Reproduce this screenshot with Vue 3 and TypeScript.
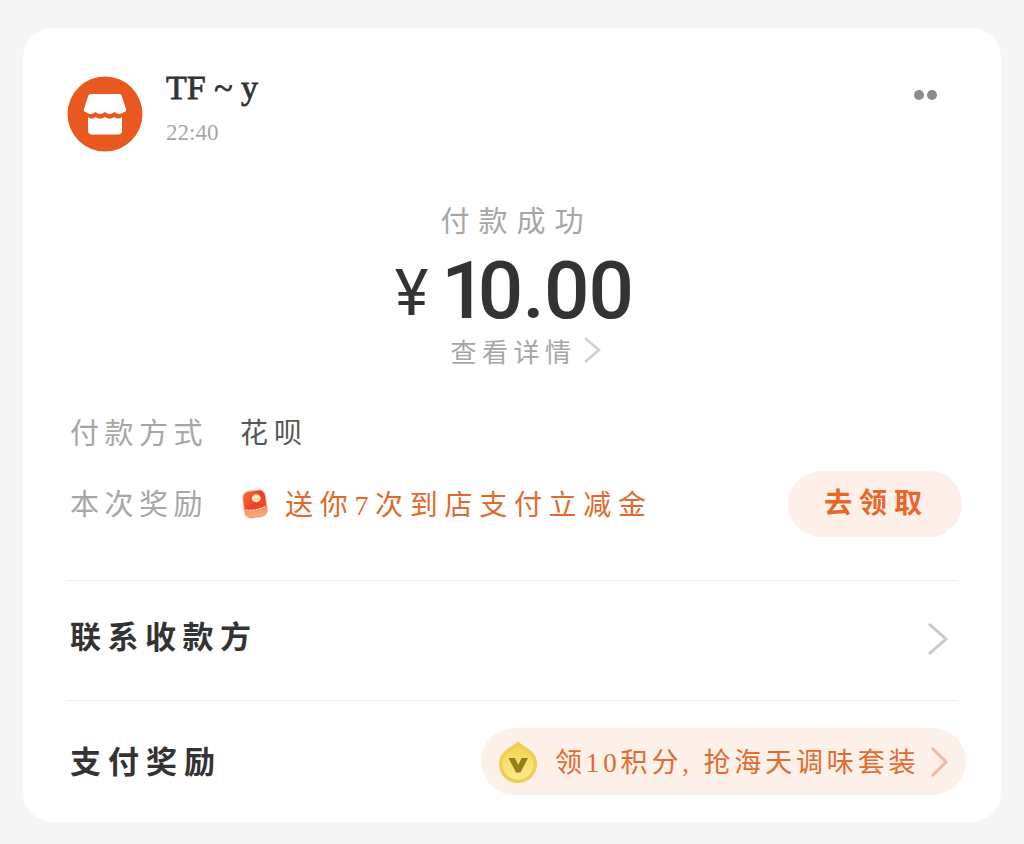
<script setup lang="ts">
const status = "付款成功";
</script>

<template>
  <main class="page">
    <section class="card">
      <header class="head">
        <div class="merchant">
          <svg class="avatar" viewBox="0 0 76 76" aria-hidden="true">
            <circle cx="38" cy="38" r="37.5" fill="#e8581f" />
            <path d="M24 18H52C53.600 18 54.600 19 55 20.400L59 33C59.600 35 58.600 36 57 36Q52.500 40 47.500 36Q42.700 40 38 36Q33.200 40 28.500 36Q23.500 40 19 36C17.400 36 16.400 35 17 33L21 20.400C21.400 19 22.400 18 24 18Z" fill="#fff" />
            <path d="M21 41Q24.700 44 28.500 41Q33.200 44.500 38 41Q42.700 44.500 47.500 41Q51.200 44 55 41V55C55 57 53.500 58.500 51.500 58.500H24.500C22.500 58.500 21 57 21 55Z" fill="#fff" />
          </svg>
          <div class="who">
            <div class="name">TF ~ y</div>
            <div class="time">22:40</div>
          </div>
        </div>
        <div class="more" aria-hidden="true"><i></i><i></i></div>
      </header>

      <div class="summary">
        <div class="status">{{ status }}</div>
        <div class="amount"><span class="yen">¥</span><span class="num"><span class="one">1</span>0.00</span></div>
        <div class="detail">
          <span>查看详情</span>
          <svg class="chev small" viewBox="0 0 20 30" aria-hidden="true"><path d="M3 3l14 12L3 27" /></svg>
        </div>
      </div>

      <div class="info">
        <div class="line">
          <span class="label">付款方式</span>
          <span class="value">花呗</span>
        </div>
        <div class="line reward">
          <span class="label">本次奖励</span>
          <svg class="packet" viewBox="0 0 30 32" aria-hidden="true">
            <defs>
              <linearGradient id="rp" x1="0" y1="0" x2="1" y2="1">
                <stop offset="0" stop-color="#f7743f" />
                <stop offset="0.45" stop-color="#ef3f25" />
                <stop offset="1" stop-color="#ee4a25" />
              </linearGradient>
              <linearGradient id="rpb" x1="0" y1="0" x2="0" y2="1">
                <stop offset="0" stop-color="#f58a55" />
                <stop offset="1" stop-color="#f7b183" />
              </linearGradient>
            </defs>
            <g transform="rotate(-8 15 16)">
              <rect x="3" y="2" width="24" height="28" rx="7" fill="#f9c2a6" />
              <rect x="4" y="3" width="22" height="26" rx="6" fill="url(#rp)" />
              <path d="M4 20q11 3 22-1v4q0 6-6 6h-10q-6 0-6-6z" fill="url(#rpb)" />
              <path d="M5 20.500q10 3 20-1" fill="none" stroke="#fff" stroke-width="0.8" stroke-dasharray="2 1.500" />
              <ellipse cx="17" cy="10.500" rx="4.500" ry="4" fill="#fde4b4" />
            </g>
          </svg>
          <span class="promo">送你7次到店支付立减金</span>
          <span class="claim">去领取</span>
        </div>
      </div>

      <div class="row contact">
        <span class="row-title">联系收款方</span>
        <svg class="chev big" viewBox="0 0 24 36" aria-hidden="true"><path d="M3 3l17 15L3 33" /></svg>
      </div>

      <div class="row bonus">
        <span class="row-title">支付奖励</span>
        <div class="pill">
          <svg class="coin" viewBox="0 0 40 44" aria-hidden="true">
            <defs>
              <linearGradient id="cn" x1="0" y1="0" x2="0" y2="1">
                <stop offset="0" stop-color="#f4d44f" />
                <stop offset="1" stop-color="#fbeb8c" />
              </linearGradient>
            </defs>
            <path d="M20 1c3 3.500 6 4.500 10 7.500 6 4 9 9 9 15.500 0 11-8.500 19-19 19S1 35 1 24c0-6.500 3-11.500 9-15.500C14 5.500 17 4.500 20 1z" fill="#f3cc55" />
            <path d="M20 6c3 2.500 5 3.500 8 5.500 5 3 7.500 7 7.500 12.500 0 9-7 15.500-15.500 15.500S4.500 33 4.500 24c0-5.500 2.500-9.500 7.500-12.500 3-2 5-3 8-5.500z" fill="url(#cn)" />
            <path d="M10.500 18h6.500l3.200 7 3.300-7H30l-7.500 14.500h-4.500z" fill="#93801c" />
          </svg>
          <span class="pill-text">领10积分, 抢海天调味套装</span>
          <svg class="chev pill-chev" viewBox="0 0 20 34" aria-hidden="true"><path d="M3 3l14 14L3 31" /></svg>
        </div>
      </div>
    </section>
  </main>
</template>

<style>
body { background: #f5f5f5; }
</style>

<style scoped>
.page {
  width: 1024px;
  height: 844px;
  padding: 28px 23px 22px;
  box-sizing: border-box;
  font-family: "Noto Sans CJK SC", "Noto Sans", sans-serif;
}
.card {
  height: 794px;
  box-sizing: border-box;
  background: #fff;
  border-radius: 30px;
  padding: 48px 44px 0;
}
.head {
  display: flex;
  justify-content: space-between;
  align-items: flex-start;
  height: 76px;
}
.merchant { display: flex; gap: 23px; }
.avatar { width: 76px; height: 76px; display: block; }
.who { margin-top: -7px; }
.name {
  font-family: "Liberation Serif", serif;
  font-size: 34px;
  line-height: 38px;
  color: #333;
  -webkit-text-stroke: 0.8px #333;
  white-space: pre;
}
.time {
  font-family: "Liberation Serif", serif;
  font-size: 23px;
  line-height: 24px;
  margin-top: 14px;
  color: #a6a6a6;
}
.more { display: flex; gap: 3px; margin: 14px 20px 0 0; }
.more i { width: 10px; height: 10px; border-radius: 50%; background: #8c8c8c; }

.summary {
  display: flex;
  flex-direction: column;
  align-items: center;
  margin-top: 47px;
}
.status {
  font-size: 29px;
  line-height: 40px;
  letter-spacing: 9px;
  margin-right: -9px;
  color: #a6a6a6;
}
.amount {
  display: flex;
  align-items: baseline;
  height: 72px;
  margin-top: 16px;
  margin-left: 4px;
  color: #333;
}
.yen { font-family: Roboto, sans-serif; font-size: 64px; line-height: 72px; margin-right: 13px; font-weight: 400; transform: translateY(-3px); }
.num { font-family: Roboto, sans-serif; font-size: 80px; line-height: 72px; font-weight: 500; letter-spacing: -0.800px; }
.one { letter-spacing: -9px; }
.detail {
  display: flex;
  align-items: center;
  height: 40px;
  margin-top: 3px;
  margin-left: 28px;
  color: #a6a6a6;
  font-size: 26px;
  letter-spacing: 5.500px;
}
.chev { fill: none; stroke-linejoin: miter; display: block; }
.small { width: 20px; height: 30px; stroke: #cfcfcf; stroke-width: 2.500; margin-left: 5px; }
.big { width: 24px; height: 36px; stroke: #c9c9c9; stroke-width: 3; margin: 10px 7px 0 0; }

.info { margin-top: 41px; }
.line { display: flex; align-items: center; }
.line:first-child { height: 40px; }
.label {
  width: 173px;
  padding-left: 3px;
  box-sizing: border-box;
  font-size: 29px;
  letter-spacing: 5.500px;
  color: #a6a6a6;
  white-space: nowrap;
}
.reward .label { margin-bottom: 4px; }
.value { font-size: 28px; letter-spacing: 6px; color: #555; }
.reward { height: 66px; margin-top: 20px; }
.packet { width: 30px; height: 32px; margin-right: 15px; }
.promo {
  font-family: "Liberation Serif", "Noto Sans CJK SC", serif;
  font-size: 28px;
  letter-spacing: 6.700px;
  color: #df6a2c;
  flex: 1;
  white-space: nowrap;
  margin-bottom: 3px;
}
.claim {
  width: 174px;
  height: 66px;
  box-sizing: border-box;
  padding: 0 0 7px 3px;
  border-radius: 33px;
  margin-right: -5px;
  background: #feefe9;
  color: #e8662a;
  font-size: 28px;
  font-weight: 700;
  letter-spacing: 7px;
  display: flex;
  align-items: center;
  justify-content: center;
  flex: none;
}
.row {
  display: flex;
  align-items: center;
  justify-content: space-between;
  border-top: 1px solid #efefef;
}
.contact { margin-top: 43px; height: 106px; padding-bottom: 13px; }
.bonus { height: 121px; }
.row-title { font-size: 31px; letter-spacing: 6.500px; font-weight: 700; color: #333; padding-left: 3px; }
.bonus .row-title { letter-spacing: 7px; margin-bottom: 5px; }
.pill {
  display: flex;
  align-items: center;
  width: 485px;
  height: 67px;
  box-sizing: border-box;
  margin-right: -9px;
  padding-left: 17px;
  border-radius: 34px;
  background: #fdf0e9;
}
.coin { width: 40px; height: 44px; margin-right: 17px; flex: none; }
.pill-text {
  font-family: "Liberation Serif", "Noto Sans CJK SC", serif;
  font-size: 27px;
  letter-spacing: 3.850px;
  color: #de6c33;
  white-space: pre;
  margin-bottom: 2px;
}
.pill-chev { width: 20px; height: 34px; stroke: #f0b9a4; stroke-width: 3; margin-left: auto; margin-right: 17px; flex: none; }
</style>
